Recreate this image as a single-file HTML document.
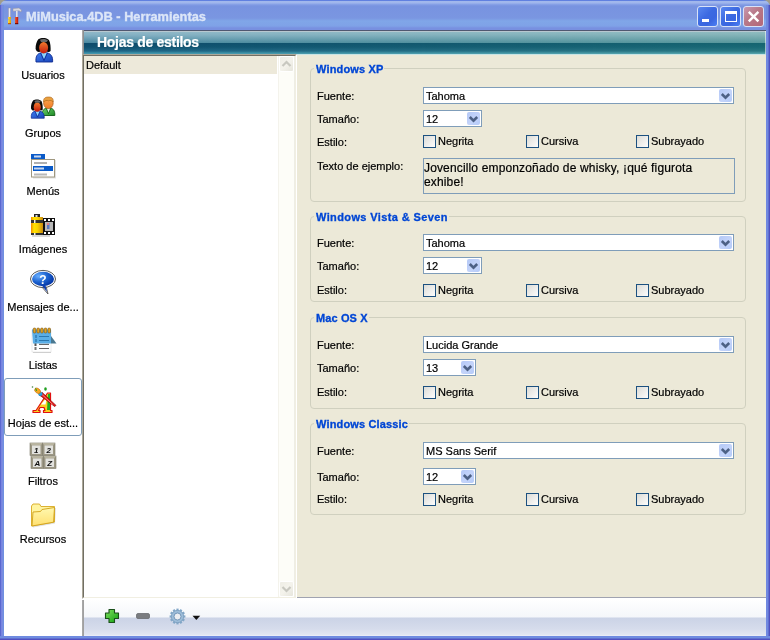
<!DOCTYPE html>
<html><head><meta charset="utf-8">
<style>
*{box-sizing:border-box}
html,body{margin:0;padding:0}
body{width:770px;height:640px;overflow:hidden;position:relative;background:#A09C8C;will-change:transform;font-family:"Liberation Sans",sans-serif;font-size:11px;line-height:13px;color:#000;-webkit-text-stroke:0.2px #000}
#ttxt{-webkit-text-stroke:0.35px #DCE6F8}
#hdrt{-webkit-text-stroke:0.2px #fff}
.gt{-webkit-text-stroke:0.3px #0046D5}
.a{position:absolute}
#title{left:0;top:0;width:770px;height:30px;border-radius:7px 7px 0 0;
 background:linear-gradient(to bottom,#6080E0 0px,#6080E0 1px,#A2B8EC 1px,#A0B6EC 3px,#8AA4E8 4px,#7893E0 6px,#7A96E1 18px,#80A6E8 21px,#7FA2E7 26px,#7890E0 28px,#7890E0 30px)}
#ttxt{left:26px;top:10px;font-weight:bold;font-size:12.8px;line-height:14px;color:#DCE6F8;white-space:nowrap}
.lb{left:0;width:4px;top:5px;height:635px;background:linear-gradient(to right,#5A68D0 0,#5A68D0 1px,#7880E0 1px,#7890E0 3px,#7090E0 3px)}
.rb{left:766px;width:4px;top:5px;height:635px;background:linear-gradient(to right,#7088E0 0,#7088E0 2px,#6070D0 2px,#6070D0 3px,#4F50C0 3px)}
.bb{left:0;top:636px;width:770px;height:4px;background:linear-gradient(to bottom,#6E88E0 0,#7090E0 2px,#6070D0 2px,#6070D0 3px,#5050C0 3px)}
.tbtn{top:6px;width:21px;height:21px;border:1px solid #D8E2F8;border-radius:3px;overflow:hidden}
#side{left:4px;top:30px;width:78px;height:606px;background:#fff}
.it{position:absolute;left:4px;width:78px;text-align:center;white-space:nowrap}
#hdr{left:84px;top:30px;width:682px;height:24px;background:linear-gradient(to bottom,#505870 0px,#505870 1px,#B8C8D0 1px,#B8C8D0 2px,#90BCC0 2px,#84B4B8 5px,#58989C 13px,#166470 13px,#1A6A76 17px,#2A7882 21px,#4A98A0 23px,#5AA8B0 24px)}
#hdr2{left:84px;top:30px;width:682px;height:24px;background:linear-gradient(to bottom,#505870 0px,#505870 1px,#B8C8D0 1px,#B8C8D0 2px,#90B8C8 2px,#84B0C4 5px,#4A88A0 13px,#0E4A6C 13px,#105070 17px,#1E6486 21px,#3A90A8 23px,#4A98B0 24px);-webkit-mask-image:linear-gradient(to right,#000,rgba(0,0,0,0))}
#hdr3{left:765px;top:31px;width:1px;height:23px;background:rgba(255,255,255,0.55)}
#hdrL{left:82px;top:30px;width:2px;height:24px;background:linear-gradient(to right,#A8A8A8 0,#A8A8A8 1px,#909090 1px)}
#hdrt{left:97px;top:35px;font-weight:bold;font-size:14px;letter-spacing:-0.3px;line-height:15px;color:#fff;white-space:nowrap}
#list{left:82px;top:54px;width:215px;height:545px;background:#fff;border-style:solid;border-width:1px;border-color:#ACA899 #fff #fff #ACA899}
#listin{left:0;top:0;width:213px;height:543px;border-style:solid;border-width:1px;border-color:#716F64 #F1EFE2 #F1EFE2 #716F64}
#panel{left:297px;top:55px;width:469px;height:542px;background:#ECE9D8}
#panelTop{left:297px;top:54px;width:469px;height:1px;background:#C8E4E4}
#panelBot{left:297px;top:597px;width:469px;height:1px;background:#A0A3B0}
#panelBot2{left:297px;top:598px;width:469px;height:1px;background:#fff}
#tb{left:84px;top:599px;width:682px;height:37px;background:linear-gradient(to bottom,#fff 0,#F4F6FA 18px,#CBD3E6 19px,#D6DCEC 30px,#E2E6F2 36px,#F0F2FA 37px)}
#tbL{left:82px;top:600px;width:2px;height:36px;background:linear-gradient(to right,#A8A8A8 0,#A8A8A8 1px,#A0A0A0 1px)}
.gb{position:absolute;border:1px solid #D0D0BF;border-radius:4px}
.gt{position:absolute;font-weight:bold;color:#0046D5;background:#ECE9D8;padding:0 1px 0 2px;white-space:nowrap}
.lbl{position:absolute;left:317px;white-space:nowrap}
.cb{position:absolute;left:423px;background:#fff;border:1px solid #7F9DB9;height:17px}
.cbt{position:absolute;left:2px;top:2px;white-space:nowrap}
.dd{position:absolute;right:1px;top:1px;width:13px;height:13px;border-radius:2px;background:linear-gradient(135deg,#B4C8F6 0%,#C4D4FA 55%,#B4CAF8 100%)}
.dd svg{position:absolute;left:0;top:0}
.chk{position:absolute;width:13px;height:13px;border:1px solid #1C5180;background:linear-gradient(135deg,#DCDCD7,#FDFDFC)}
.ct{position:absolute;white-space:nowrap}
#ta{left:423px;top:158px;width:312px;height:36px;border:1px solid #7F9DB9;background:#ECE9D8}
#tat{left:0px;top:2px;font-size:12px;letter-spacing:0.15px;line-height:14px;white-space:nowrap}
#sel{left:84px;top:56px;width:193px;height:18px;background:#EDE9DA}
#dflt{left:86px;top:59px}
.sbtn{position:absolute;left:279px;width:15px;height:16px;border:1px solid #fff;border-radius:2px;background:linear-gradient(135deg,#EEEDE5,#F4F3EC 50%,#E6E5DC)}
#track{left:278px;top:56px;width:17px;height:541px;background:#FDFDF8;border-left:1px solid #F4F3EC;border-right:1px solid #EEEDE5}
#selbox{left:4px;top:378px;width:78px;height:58px;border:1px solid #7F9DB9;border-radius:3px}
</style></head><body>
<svg width="0" height="0" style="position:absolute"><defs>
<linearGradient id="gFace" x1="0" y1="0" x2="0" y2="1"><stop offset="0" stop-color="#F27A2E"/><stop offset="1" stop-color="#C41A0C"/></linearGradient>
<linearGradient id="gFace2" x1="0" y1="0" x2="0" y2="1"><stop offset="0" stop-color="#FCA850"/><stop offset="1" stop-color="#F07C28"/></linearGradient>
<linearGradient id="gBlue" x1="0" y1="0" x2="1" y2="1"><stop offset="0" stop-color="#3C7CF0"/><stop offset="1" stop-color="#1A44B8"/></linearGradient>
<linearGradient id="gGreen" x1="0" y1="0" x2="1" y2="1"><stop offset="0" stop-color="#70D070"/><stop offset="1" stop-color="#1C8A24"/></linearGradient>
<linearGradient id="gCan" x1="0" y1="0" x2="1" y2="0"><stop offset="0" stop-color="#F08A00"/><stop offset="0.25" stop-color="#FFE400"/><stop offset="0.55" stop-color="#F8D000"/><stop offset="1" stop-color="#C88A10"/></linearGradient>
<radialGradient id="gBub" cx="0.3" cy="0.3" r="0.8"><stop offset="0" stop-color="#6AB0FF"/><stop offset="0.5" stop-color="#1E64D0"/><stop offset="1" stop-color="#0030A0"/></radialGradient>
<linearGradient id="gFold" x1="0" y1="0" x2="0" y2="1"><stop offset="0" stop-color="#FFF8B0"/><stop offset="1" stop-color="#FFE070"/></linearGradient>
<linearGradient id="gPlus" x1="0" y1="0" x2="1" y2="1"><stop offset="0" stop-color="#80E060"/><stop offset="1" stop-color="#10A010"/></linearGradient>
<linearGradient id="gRed" x1="0" y1="0" x2="1" y2="0"><stop offset="0" stop-color="#F06030"/><stop offset="1" stop-color="#C01008"/></linearGradient>
<linearGradient id="gYel" x1="0" y1="0" x2="1" y2="0"><stop offset="0" stop-color="#FFE040"/><stop offset="1" stop-color="#E0A000"/></linearGradient>
</defs></svg>
<div class="a" id="title"></div>
<div class="a" id="ttxt">MiMusica.4DB - Herramientas</div>
<div class="a lb"></div><div class="a rb"></div><div class="a bb"></div>
<div class="a tbtn" style="left:697px;background:linear-gradient(135deg,#5A88F0 0%,#3C6AE2 45%,#3A66E0 70%,#4C80F4 100%)"><div class="a" style="left:4px;top:12px;width:7px;height:3px;background:#fff"></div></div>
<div class="a tbtn" style="left:720px;background:linear-gradient(135deg,#5A88F0 0%,#3C6AE2 45%,#3A66E0 70%,#4C80F4 100%)"><div class="a" style="left:4px;top:4px;width:12px;height:11px;border:1px solid #fff;border-top-width:3px"></div></div>
<div class="a tbtn" style="left:743px;background:linear-gradient(135deg,#C898B0 0%,#B87888 45%,#B46878 100%)"><svg class="a" style="left:0;top:0" width="19" height="19"><path d="M4.8 4.8 L14.4 14.4 M14.4 4.8 L4.8 14.4" stroke="#fff" stroke-width="2.4"/></svg></div>
<div class="a" style="left:4px;top:30px;width:762px;height:606px;background:#fff"></div>
<div class="a" id="side"></div>
<div class="a" id="hdr"></div><div class="a" id="hdr2"></div><div class="a" id="hdr3"></div><div class="a" id="hdrL"></div>
<div class="a" id="hdrt">Hojas de estilos</div>
<div class="a" id="list"><div class="a" id="listin"></div></div>
<div class="a" id="sel"></div><div class="a" id="dflt">Default</div>
<div class="a" id="track"></div>
<div class="sbtn" style="top:56px"><svg class="a" style="left:0;top:0" width="13" height="14"><path d="M2.5 9 L6.5 5 L10.5 9" fill="none" stroke="#C8C8C0" stroke-width="2.2"/></svg></div>
<div class="sbtn" style="top:581px"><svg class="a" style="left:0;top:0" width="13" height="14"><path d="M2.5 5 L6.5 9 L10.5 5" fill="none" stroke="#C8C8C0" stroke-width="2.2"/></svg></div>
<div class="a" id="panelTop"></div><div class="a" id="panel"></div><div class="a" id="panelBot"></div><div class="a" id="panelBot2"></div>
<div class="a" id="tb"></div><div class="a" id="tbL"></div>
<div class="gb" style="left:310px;top:68px;width:436px;height:134px"></div>
<div class="gt" style="left:314px;top:63px;letter-spacing:0.15px">Windows XP</div>
<div class="lbl" style="top:90px">Fuente:</div>
<div class="cb" style="top:87px;width:311px"><div class="cbt">Tahoma</div><div class="dd"><svg width="13" height="13"><path d="M2.8 5 L6.5 8.7 L10.2 5" fill="none" stroke="#4D6185" stroke-width="2.6"/></svg></div></div>
<div class="lbl" style="top:113px">Tamaño:</div>
<div class="cb" style="top:110px;width:59px"><div class="cbt">12</div><div class="dd"><svg width="13" height="13"><path d="M2.8 5 L6.5 8.7 L10.2 5" fill="none" stroke="#4D6185" stroke-width="2.6"/></svg></div></div>
<div class="lbl" style="top:136px">Estilo:</div>
<div class="chk" style="left:423px;top:135px"></div><div class="ct" style="left:438px;top:135px">Negrita</div>
<div class="chk" style="left:526px;top:135px"></div><div class="ct" style="left:541px;top:135px">Cursiva</div>
<div class="chk" style="left:636px;top:135px"></div><div class="ct" style="left:651px;top:135px">Subrayado</div>
<div class="lbl" style="top:160px">Texto de ejemplo:</div><div class="a" id="ta"><div class="a" id="tat">Jovencillo emponzoñado de whisky, ¡qué figurota<br>exhibe!</div></div>
<div class="gb" style="left:310px;top:216px;width:436px;height:86px"></div>
<div class="gt" style="left:314px;top:211px;letter-spacing:0.38px">Windows Vista &amp; Seven</div>
<div class="lbl" style="top:237px">Fuente:</div>
<div class="cb" style="top:234px;width:311px"><div class="cbt">Tahoma</div><div class="dd"><svg width="13" height="13"><path d="M2.8 5 L6.5 8.7 L10.2 5" fill="none" stroke="#4D6185" stroke-width="2.6"/></svg></div></div>
<div class="lbl" style="top:260px">Tamaño:</div>
<div class="cb" style="top:257px;width:59px"><div class="cbt">12</div><div class="dd"><svg width="13" height="13"><path d="M2.8 5 L6.5 8.7 L10.2 5" fill="none" stroke="#4D6185" stroke-width="2.6"/></svg></div></div>
<div class="lbl" style="top:284px">Estilo:</div>
<div class="chk" style="left:423px;top:284px"></div><div class="ct" style="left:438px;top:284px">Negrita</div>
<div class="chk" style="left:526px;top:284px"></div><div class="ct" style="left:541px;top:284px">Cursiva</div>
<div class="chk" style="left:636px;top:284px"></div><div class="ct" style="left:651px;top:284px">Subrayado</div>

<div class="gb" style="left:310px;top:317px;width:436px;height:92px"></div>
<div class="gt" style="left:314px;top:312px;letter-spacing:0.12px">Mac OS X</div>
<div class="lbl" style="top:339px">Fuente:</div>
<div class="cb" style="top:336px;width:311px"><div class="cbt">Lucida Grande</div><div class="dd"><svg width="13" height="13"><path d="M2.8 5 L6.5 8.7 L10.2 5" fill="none" stroke="#4D6185" stroke-width="2.6"/></svg></div></div>
<div class="lbl" style="top:362px">Tamaño:</div>
<div class="cb" style="top:359px;width:53px"><div class="cbt">13</div><div class="dd"><svg width="13" height="13"><path d="M2.8 5 L6.5 8.7 L10.2 5" fill="none" stroke="#4D6185" stroke-width="2.6"/></svg></div></div>
<div class="lbl" style="top:386px">Estilo:</div>
<div class="chk" style="left:423px;top:386px"></div><div class="ct" style="left:438px;top:386px">Negrita</div>
<div class="chk" style="left:526px;top:386px"></div><div class="ct" style="left:541px;top:386px">Cursiva</div>
<div class="chk" style="left:636px;top:386px"></div><div class="ct" style="left:651px;top:386px">Subrayado</div>

<div class="gb" style="left:310px;top:423px;width:436px;height:92px"></div>
<div class="gt" style="left:314px;top:418px;letter-spacing:0.15px">Windows Classic</div>
<div class="lbl" style="top:445px">Fuente:</div>
<div class="cb" style="top:442px;width:311px"><div class="cbt">MS Sans Serif</div><div class="dd"><svg width="13" height="13"><path d="M2.8 5 L6.5 8.7 L10.2 5" fill="none" stroke="#4D6185" stroke-width="2.6"/></svg></div></div>
<div class="lbl" style="top:471px">Tamaño:</div>
<div class="cb" style="top:468px;width:53px"><div class="cbt">12</div><div class="dd"><svg width="13" height="13"><path d="M2.8 5 L6.5 8.7 L10.2 5" fill="none" stroke="#4D6185" stroke-width="2.6"/></svg></div></div>
<div class="lbl" style="top:493px">Estilo:</div>
<div class="chk" style="left:423px;top:493px"></div><div class="ct" style="left:438px;top:493px">Negrita</div>
<div class="chk" style="left:526px;top:493px"></div><div class="ct" style="left:541px;top:493px">Cursiva</div>
<div class="chk" style="left:636px;top:493px"></div><div class="ct" style="left:651px;top:493px">Subrayado</div>

<div class="a" id="selbox"></div>
<div class="it" style="top:69px">Usuarios</div>
<div class="it" style="top:127px">Grupos</div>
<div class="it" style="top:185px">Menús</div>
<div class="it" style="top:243px">Imágenes</div>
<div class="it" style="top:301px">Mensajes de...</div>
<div class="it" style="top:359px">Listas</div>
<div class="it" style="top:417px">Hojas de est...</div>
<div class="it" style="top:475px">Filtros</div>
<div class="it" style="top:533px">Recursos</div>
<svg class="a" style="left:31px;top:36px" width="26" height="28" viewBox="0 0 26 28"><path d="M5 26 C4.5 20.5 6 17.8 10 16.8 L16 16.8 C20 17.8 22 20.5 21.6 26 Z" fill="url(#gBlue)" stroke="#0E2A90" stroke-width="0.9"/><path d="M10.2 17 L13 23.5 L15.8 17 Z" fill="#8CD2F8"/><path d="M9.6 17 L13 24.5 L16.4 17" fill="none" stroke="#0E2A90" stroke-width="0.9"/><path d="M7.6 3 C10 1.4 16 1.4 18 4 C19.6 7 19.8 12 19.6 15 C18.4 16.4 16.5 16.2 15 15.2 L10 15.2 C8 16.6 5.4 16 4.6 13 C4.4 9 5.8 5 7.6 3 Z" fill="#0A0A0A"/><path d="M9 3.8 C11 2.6 15 2.6 17 4.6 L15.5 6 L10 6 Z" fill="#6A6A6A"/><ellipse cx="12.6" cy="11.8" rx="4.5" ry="5.7" fill="url(#gFace)"/></svg>
<svg class="a" style="left:28px;top:94px" width="30" height="28" viewBox="0 0 30 28"><path d="M14.2 21.5 C14 17 15.5 14.8 18.5 14 L22.5 14 C25.5 14.8 27 17 26.8 21.5 Z" fill="url(#gGreen)" stroke="#0E5A14" stroke-width="0.9"/><path d="M18.6 14.3 L20.5 19 L22.4 14.3 Z" fill="#E8F8F0"/><path d="M18.2 14.2 L20.5 19.6 L22.8 14.2" fill="none" stroke="#0E5A14" stroke-width="0.8"/><ellipse cx="20.4" cy="9.2" rx="4.8" ry="5.4" fill="url(#gFace2)" stroke="#A05010" stroke-width="0.6"/><path d="M15.6 8 C15.2 4 17.5 3 20.5 3 C23.5 3 25.6 4 25.2 8 C24 6.5 22 6 20.5 6.8 C19 6 17 6.5 15.6 8 Z" fill="#E8A040" stroke="#A86018" stroke-width="0.6"/><g transform="translate(-0.6,4.0) scale(0.78)"><path d="M5 26 C4.5 20.5 6 17.8 10 16.8 L16 16.8 C20 17.8 22 20.5 21.6 26 Z" fill="url(#gBlue)" stroke="#0E2A90" stroke-width="0.9"/><path d="M10.2 17 L13 23.5 L15.8 17 Z" fill="#8CD2F8"/><path d="M9.6 17 L13 24.5 L16.4 17" fill="none" stroke="#0E2A90" stroke-width="0.9"/><path d="M7.6 3 C10 1.4 16 1.4 18 4 C19.6 7 19.8 12 19.6 15 C18.4 16.4 16.5 16.2 15 15.2 L10 15.2 C8 16.6 5.4 16 4.6 13 C4.4 9 5.8 5 7.6 3 Z" fill="#0A0A0A"/><path d="M9 3.8 C11 2.6 15 2.6 17 4.6 L15.5 6 L10 6 Z" fill="#6A6A6A"/><ellipse cx="12.6" cy="11.8" rx="4.5" ry="5.7" fill="url(#gFace)"/></g></svg>
<svg class="a" style="left:28px;top:150px" width="30" height="30" viewBox="0 0 30 30"><rect x="5" y="10" width="23" height="18.5" fill="#000" opacity="0.12"/><rect x="3" y="4" width="14" height="5" fill="#0A5AC8"/><rect x="6" y="5.5" width="7" height="2" fill="#C8D8F0"/><rect x="3.5" y="9.5" width="23" height="17.5" fill="#fff" stroke="#A09880" stroke-width="1"/><rect x="6" y="12" width="13" height="2" fill="#B0B0B0"/><rect x="5" y="16" width="20" height="5" fill="#0A5AC8"/><rect x="6" y="17.5" width="10" height="2" fill="#C8D8F0"/><rect x="6" y="23.5" width="13" height="2" fill="#B8B8B8"/></svg>
<svg class="a" style="left:28px;top:210px" width="30" height="30" viewBox="0 0 30 30"><rect x="4" y="24" width="18" height="3" fill="#000" opacity="0.15"/><rect x="15" y="8" width="12" height="17" fill="#111"/><rect x="17" y="12" width="8" height="9" fill="#B8B8B8"/><rect x="19" y="13" width="2.5" height="6" fill="#5878C0"/><rect x="19" y="13" width="2" height="2" fill="#E08080"/><rect x="16" y="9" width="2" height="2" fill="#fff"/><rect x="20" y="9" width="2" height="2" fill="#fff"/><rect x="24" y="9" width="2" height="2" fill="#fff"/><rect x="16" y="22" width="2" height="2" fill="#fff"/><rect x="20" y="22" width="2" height="2" fill="#fff"/><rect x="24" y="22" width="2" height="2" fill="#fff"/><rect x="6" y="4" width="6" height="3" fill="#222"/><rect x="7.5" y="5" width="2" height="2" fill="#ddd"/><rect x="3" y="7" width="12" height="18" fill="url(#gCan)"/><rect x="3" y="10" width="12" height="3" fill="#333"/><rect x="6" y="10" width="1.5" height="3" fill="#eee"/><rect x="3" y="23" width="12" height="2" fill="#333"/><rect x="6" y="23" width="1.5" height="2" fill="#eee"/></svg>
<svg class="a" style="left:28px;top:266px" width="30" height="30" viewBox="0 0 30 30"><path d="M13 20 L20 28 L18 20 Z" fill="#fff" stroke="#555" stroke-width="0.9"/><ellipse cx="15" cy="13" rx="12.5" ry="8.6" fill="#fff" stroke="#585858" stroke-width="1"/><ellipse cx="15" cy="13" rx="11" ry="7.2" fill="url(#gBub)"/><path d="M14 19.5 L19 26 L17.5 19.5 Z" fill="#1040B0"/><text x="15" y="18.3" text-anchor="middle" font-family="Liberation Sans" font-weight="bold" font-size="12" fill="#fff">?</text></svg>
<svg class="a" style="left:28px;top:324px" width="30" height="30" viewBox="0 0 30 30"><rect x="5" y="27" width="18" height="2" fill="#000" opacity="0.2"/><rect x="4" y="6" width="19" height="22" fill="#fff" stroke="#D8D8D8" stroke-width="0.5"/><rect x="11" y="19.8" width="10" height="1" fill="#444"/><rect x="11" y="24" width="10" height="1" fill="#666"/><rect x="6.5" y="19" width="2" height="3" fill="#555"/><rect x="6.5" y="23" width="2" height="3" fill="#777"/><path d="M23 12 L28.5 19.6 L23 19.6 Z" fill="#4A7890"/><path d="M4 5.5 L23 5.5 L23 19.6 L5 19.6 Z" fill="#5AAEE6"/><rect x="11" y="12" width="10" height="1" fill="#2A78B0"/><rect x="11" y="16" width="10" height="1" fill="#2A78B0"/><rect x="7" y="11" width="2" height="3" fill="#3A88C0"/><rect x="7" y="15" width="2" height="3" fill="#3A88C0"/><rect x="5.2" y="4" width="2.6" height="5" rx="1" fill="#E0A020" stroke="#6A4A10" stroke-width="0.5"/><rect x="8.899999999999999" y="4" width="2.6" height="5" rx="1" fill="#E0A020" stroke="#6A4A10" stroke-width="0.5"/><rect x="12.6" y="4" width="2.6" height="5" rx="1" fill="#E0A020" stroke="#6A4A10" stroke-width="0.5"/><rect x="16.2" y="4" width="2.6" height="5" rx="1" fill="#E0A020" stroke="#6A4A10" stroke-width="0.5"/><rect x="19.9" y="4" width="2.6" height="5" rx="1" fill="#E0A020" stroke="#6A4A10" stroke-width="0.5"/></svg>
<svg class="a" style="left:28px;top:384px" width="32" height="32" viewBox="0 0 32 32"><path d="M5 28.5 L12 28.5 L12 26.5 L10.5 26.5 L12 23.5 L16 23.5 L17 26.5 L15.5 26.5 L15.5 28.5 L24 28.5 L24 26.5 L22.5 26.5 L22.5 9 L19.5 9 L8 26.5 L5 26.5 Z" fill="#F8D020" stroke="#E01010" stroke-width="1.2" stroke-linejoin="round"/><path d="M20 10 L22 10 L22 26 L19 26 Z" fill="#20B020"/><path d="M13 20.5 L17.5 20.5 L19 13 Z" fill="#fff"/><path d="M14.1 8.4 L28 21.4 L26.8 22.6 L11.7 11.2 Z" fill="#E41818" stroke="#900000" stroke-width="0.7"/><path d="M13.4 9.9 L24.5 20.3" stroke="#FFB0A0" stroke-width="0.7"/><circle cx="12.4" cy="9.9" r="1.9" fill="#28A8E8" stroke="#1070B0" stroke-width="0.5"/><ellipse cx="9.6" cy="6.8" rx="3.3" ry="2.3" transform="rotate(40 9.6 6.8)" fill="#F8A820" stroke="#B86000" stroke-width="0.5"/><path d="M7 3.2 L9.2 6.2 L8 7.2 Z" fill="#20A020"/><circle cx="4.5" cy="3" r="0.8" fill="#408040"/><ellipse cx="17.5" cy="5" rx="1.3" ry="1.8" fill="#20A020"/></svg>
<svg class="a" style="left:28px;top:440px" width="30" height="32" viewBox="0 0 30 32"><rect x="2" y="3" width="12.5" height="12.5" fill="#9C9784" stroke="#7C7868" stroke-width="0.6"/><path d="M2 3 L14.5 3 L12.5 5.5 L4 5.5 Z" fill="#B8B4A0"/><rect x="4" y="5.5" width="8.5" height="8.5" fill="#E2E2DE"/><text x="8.3" y="12.8" text-anchor="middle" font-family="Liberation Sans" font-style="italic" font-weight="bold" font-size="8" fill="#111">1</text><rect x="14.5" y="3" width="12.5" height="12.5" fill="#9C9784" stroke="#7C7868" stroke-width="0.6"/><path d="M14.5 3 L27.0 3 L25.0 5.5 L16.5 5.5 Z" fill="#B8B4A0"/><rect x="16.5" y="5.5" width="8.5" height="8.5" fill="#E2E2DE"/><text x="20.8" y="12.8" text-anchor="middle" font-family="Liberation Sans" font-style="italic" font-weight="bold" font-size="8" fill="#111">2</text><rect x="3" y="16" width="12.5" height="12.5" fill="#9C9784" stroke="#7C7868" stroke-width="0.6"/><path d="M3 16 L15.5 16 L13.5 18.5 L5 18.5 Z" fill="#B8B4A0"/><rect x="5" y="18.5" width="8.5" height="8.5" fill="#E2E2DE"/><text x="9.3" y="25.8" text-anchor="middle" font-family="Liberation Sans" font-style="italic" font-weight="bold" font-size="8" fill="#111">A</text><rect x="15.5" y="16" width="12.5" height="12.5" fill="#9C9784" stroke="#7C7868" stroke-width="0.6"/><path d="M15.5 16 L28.0 16 L26.0 18.5 L17.5 18.5 Z" fill="#B8B4A0"/><rect x="17.5" y="18.5" width="8.5" height="8.5" fill="#E2E2DE"/><text x="21.8" y="25.8" text-anchor="middle" font-family="Liberation Sans" font-style="italic" font-weight="bold" font-size="8" fill="#111">Z</text></svg>
<svg class="a" style="left:28px;top:500px" width="30" height="30" viewBox="0 0 30 30"><path d="M4 26.5 L26 22.5 L27 7 L13 7 L11.5 4 L5 4 L3.5 6 Z" fill="#000" opacity="0.12" transform="translate(1,1)"/><path d="M3.5 26 L3.5 6 L5 4 L11.5 4 L13 6.5 L26.5 6.5 L26.5 22 Z" fill="#FFF4A0" stroke="#D8A820" stroke-width="0.9"/><path d="M4 26 L5 12 L12.5 11.5 L14 9.5 L26.5 7.5 L25.5 22.2 Z" fill="url(#gFold)" stroke="#D0A018" stroke-width="0.9"/></svg>
<svg class="a" style="left:4px;top:4px" width="22" height="24" viewBox="0 0 22 24"><rect x="4.5" y="4" width="2" height="10" fill="#E8E8F0" stroke="#9090A8" stroke-width="0.4"/><path d="M4 13 L7 13 L7 14.5 L6.3 15.5 L7 16.5 L7 20 L4 20 L4 16.5 L4.7 15.5 L4 14.5 Z" fill="url(#gYel)"/><rect x="4" y="19.2" width="3" height="1" fill="#C04000"/><path d="M9 4.5 L15 4 L17.5 6 L17 8 L15 6.8 L9 7.2 Z" fill="#D8D8E0" stroke="#9090A0" stroke-width="0.5"/><rect x="12" y="7" width="1.6" height="6.5" fill="#E0E0E8"/><rect x="11" y="13" width="3.2" height="7" fill="url(#gRed)"/><rect x="11" y="19.2" width="3.2" height="1" fill="#600000"/></svg>
<svg class="a" style="left:104px;top:608px" width="17" height="17" viewBox="0 0 17 17"><path d="M5 1.5 L10.5 1.5 L10.5 5 L14.5 5 L14.5 10.5 L10.5 10.5 L10.5 14.5 L5 14.5 L5 10.5 L1.5 10.5 L1.5 5 L5 5 Z" fill="url(#gPlus)" stroke="#1A501A" stroke-width="1.1" stroke-linejoin="round"/></svg>
<svg class="a" style="left:135px;top:612px" width="16" height="8" viewBox="0 0 16 8"><rect x="1.5" y="1.5" width="13" height="5" rx="1.5" fill="#7A7C80" stroke="#6A6C70" stroke-width="0.8"/></svg>
<svg class="a" style="left:169px;top:608px" width="18" height="18" viewBox="0 0 18 18"><rect x="7.4" y="0.6" width="2.2" height="3" fill="#84A8C8" transform="rotate(0 8.5 8.5)"/><rect x="7.4" y="0.6" width="2.2" height="3" fill="#84A8C8" transform="rotate(30 8.5 8.5)"/><rect x="7.4" y="0.6" width="2.2" height="3" fill="#84A8C8" transform="rotate(60 8.5 8.5)"/><rect x="7.4" y="0.6" width="2.2" height="3" fill="#84A8C8" transform="rotate(90 8.5 8.5)"/><rect x="7.4" y="0.6" width="2.2" height="3" fill="#84A8C8" transform="rotate(120 8.5 8.5)"/><rect x="7.4" y="0.6" width="2.2" height="3" fill="#84A8C8" transform="rotate(150 8.5 8.5)"/><rect x="7.4" y="0.6" width="2.2" height="3" fill="#84A8C8" transform="rotate(180 8.5 8.5)"/><rect x="7.4" y="0.6" width="2.2" height="3" fill="#84A8C8" transform="rotate(210 8.5 8.5)"/><rect x="7.4" y="0.6" width="2.2" height="3" fill="#84A8C8" transform="rotate(240 8.5 8.5)"/><rect x="7.4" y="0.6" width="2.2" height="3" fill="#84A8C8" transform="rotate(270 8.5 8.5)"/><rect x="7.4" y="0.6" width="2.2" height="3" fill="#84A8C8" transform="rotate(300 8.5 8.5)"/><rect x="7.4" y="0.6" width="2.2" height="3" fill="#84A8C8" transform="rotate(330 8.5 8.5)"/><circle cx="8.5" cy="8.5" r="6.2" fill="#9CBCD8" stroke="#7498BA" stroke-width="0.7"/><circle cx="8.5" cy="8.5" r="3.5" fill="#ECEEF2" stroke="#6C90B4" stroke-width="0.9"/></svg>
<svg class="a" style="left:192px;top:615px" width="9" height="6" viewBox="0 0 9 6"><path d="M0.5 0.8 L8.2 0.8 L4.35 5 Z" fill="#111"/></svg>
</body></html>
